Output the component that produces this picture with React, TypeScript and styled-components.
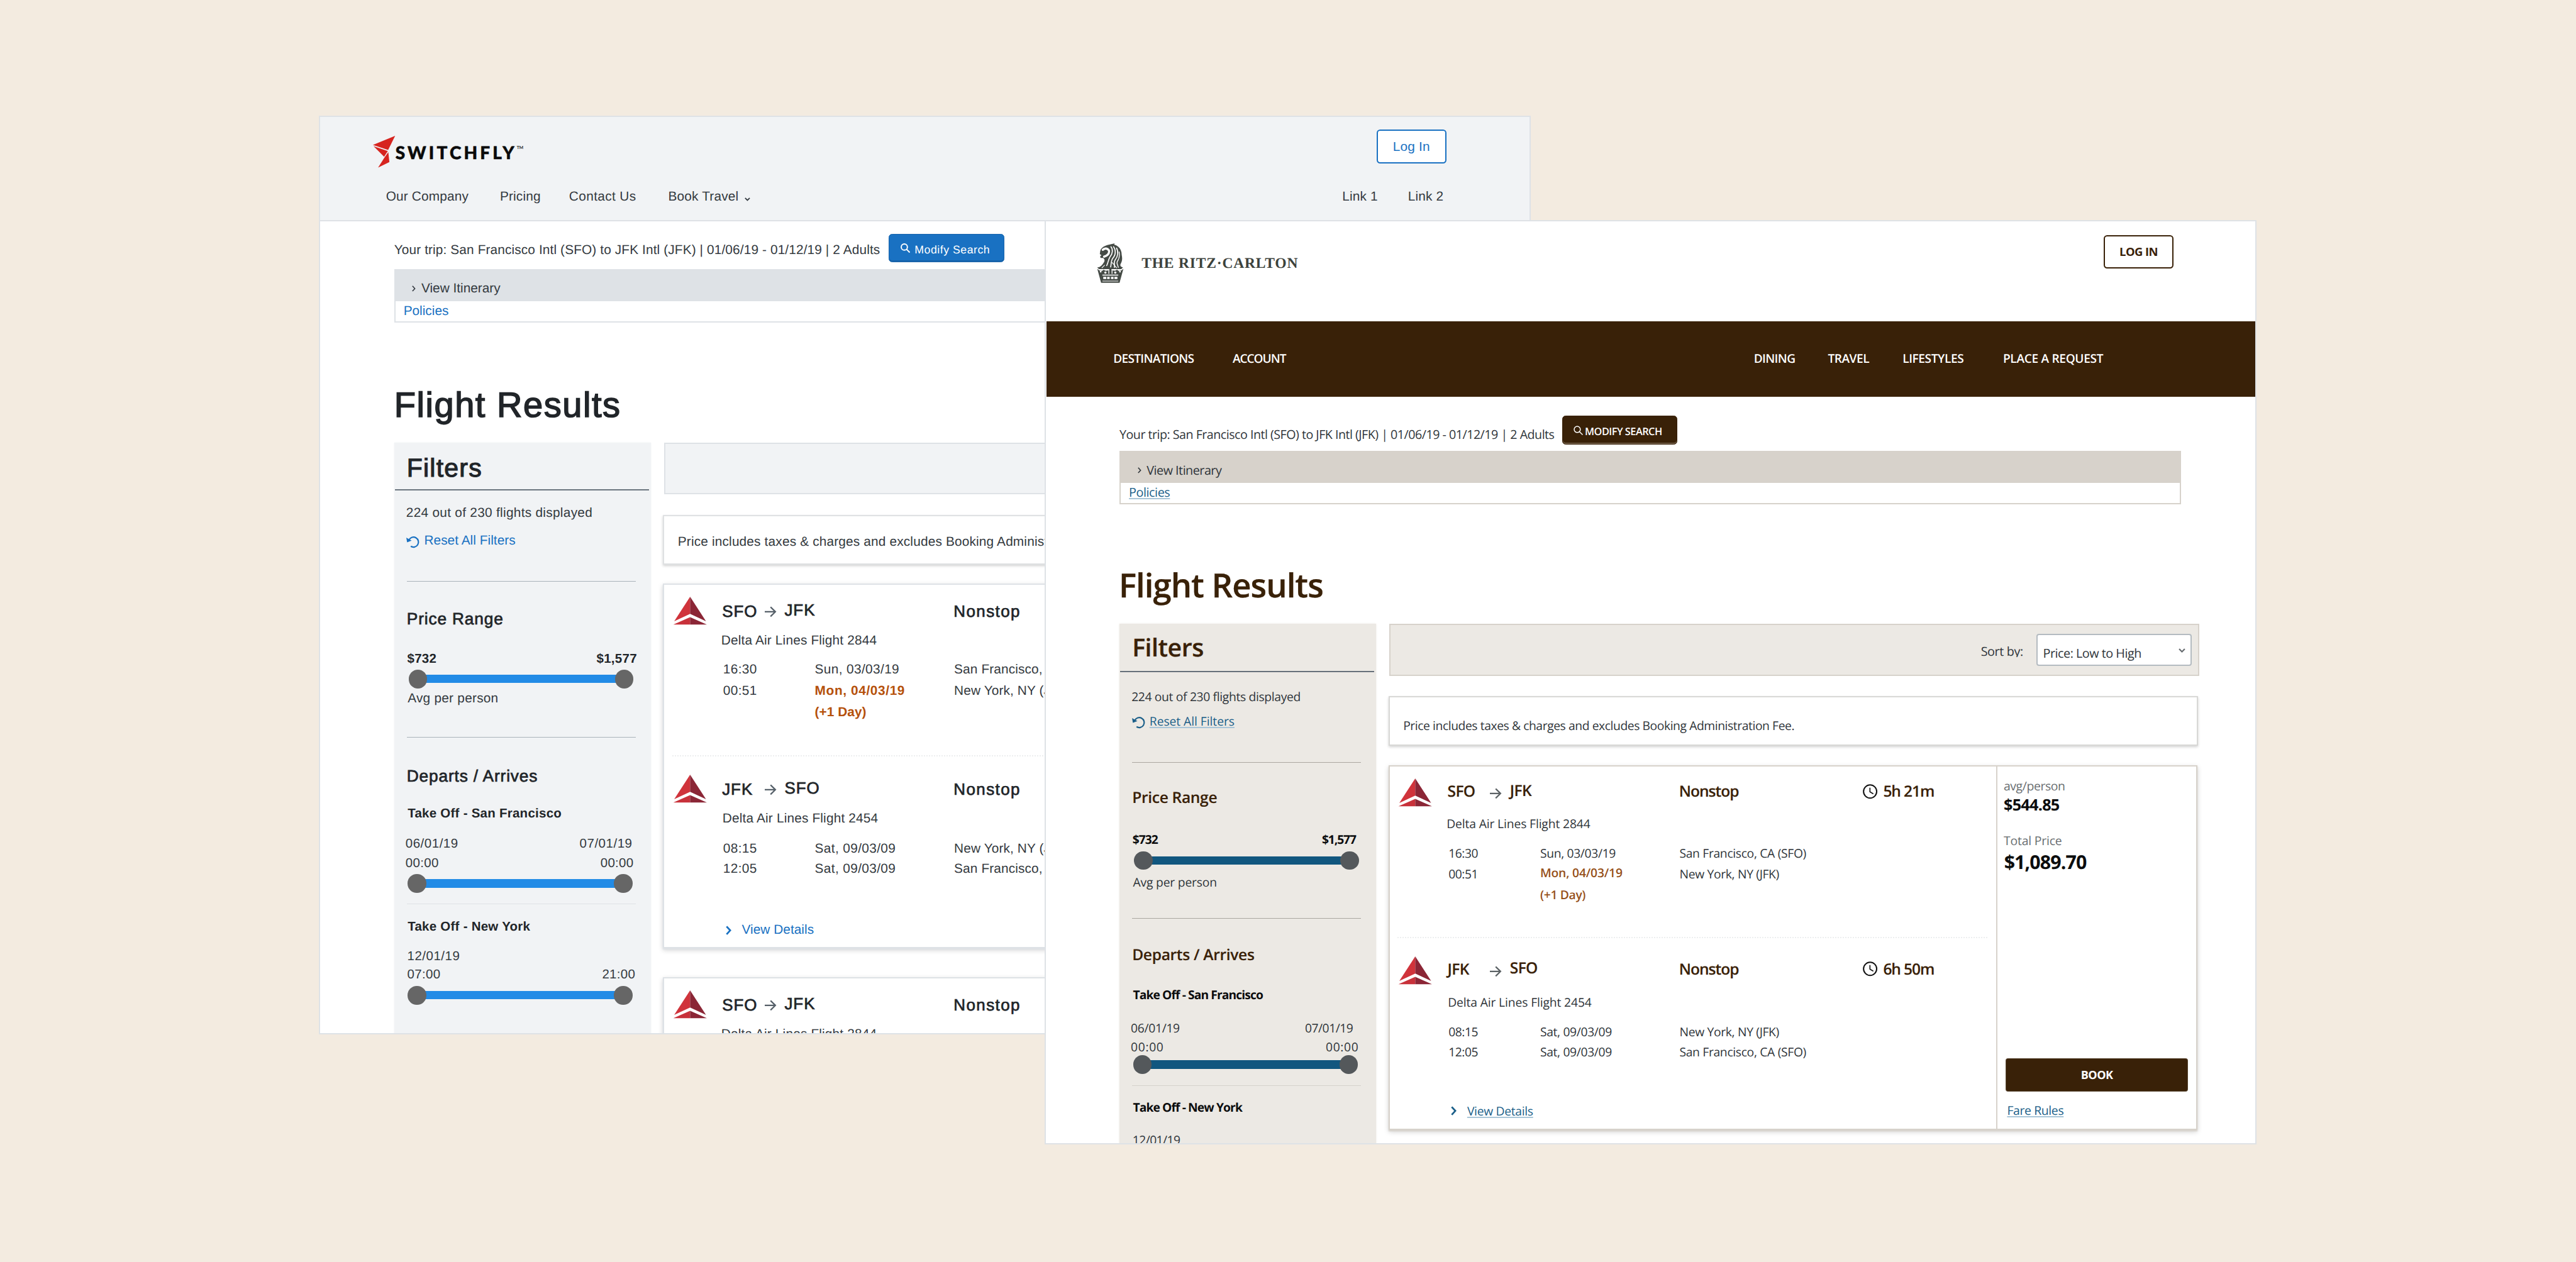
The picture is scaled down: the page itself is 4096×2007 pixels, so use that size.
import React from 'react';
import styled, { createGlobalStyle, ThemeProvider } from 'styled-components';

/* One rem is 100 design units, so u(250) reads "250 design units". */
const u = (n: number) => `${+(n / 100).toFixed(4)}rem`;

const GlobalStyle = createGlobalStyle`
  html { font-size: 68.2667px; text-rendering: geometricPrecision; }
  body { margin: 0; background: #f3ebe0; }
  *, *::before, *::after { box-sizing: border-box; }
`;

/* ---------- brands ---------- */

const switchfly = {
  name: 'switchfly',
  font: '"Liberation Sans", Arial, sans-serif',
  ascent: 0.8465,
  nudge: 1.4,
  heading: '#212529',
  body: '#343a40',
  strong: '#212529',
  link: '#1971c2',
  underline: 'transparent',
  panel: '#f1f3f5',
  band: '#dee2e6',
  border: '#dee2e6',
  rule: '#a9b2ba',
  softRule: '#dee2e6',
  titleRule: '#6a757e',
  track: '#228be6',
  knob: '#666666',
  warn: '#b5500b',
  arrow: '#566069',
  headWeight: 400,
  headStroke: '0.028em',
  warnWeight: 700,
  type: { body: 30.5, dateTrack: 0.018, title: 82, titleTrack: 0.028, filters: 60, filtersTrack: 0.03, h3: 38.5, h3Track: 0.032, city: 38, cityTrack: 0.036, stopTrack: 0.055, bold: 30, boldTrack: 0.013, priceTrack: 0.014, clockTrack: 0.016, detailTrack: 0.008, resetTrack: 0.002, warnTrack: 0.03, tripTrack: 0.006, timeTrack: 0.016, noticeTrack: 0.008 },
  y: { trip: 78, tripRow: 112, modify: 30, view: 51.8, policies: 32.7, title: 219, afterTitle: 59.6, filters: 79, titleRule: 30.8, count: 61.6, reset: 64, rule1: 84, range: 99, price: 91, slider1: 15.6, avg: 33.2, rule2: 79.5, departs: 102.5, takeoff: 85.4, date: 70.1, time: 44.5, slider2: 16, softRule: 25.4, takeoff2: 61.5, date2: 69, notice: 73.8, noticeGap: 47.7, cardGap: 44.2 },
  leg: [ { city: 78.6, to: 76, flight: 64.4, first: 68, second: 48.7 }, { city: 90.5, to: 88, flight: 64.5, first: 70, second: 46.8 } ],
  details: 142.8,
};

const ritz: typeof switchfly = {
  name: 'ritz',
  font: '"Open Sans", "Noto Sans", sans-serif',
  ascent: 0.888,
  nudge: 1.6,
  heading: '#392108',
  body: '#2f353a',
  strong: '#0c0d0e',
  link: '#1b5f89',
  underline: '#a9c6d8',
  panel: '#ece9e4',
  band: '#d7d2cb',
  border: '#d7d2cb',
  rule: '#aaa6a0',
  softRule: '#d5d1cb',
  titleRule: '#66707a',
  track: '#11577f',
  knob: '#54585b',
  warn: '#97511a',
  arrow: '#5c6265',
  headWeight: 600,
  headStroke: '0.006em',
  warnWeight: 600,
  type: { body: 28.3, dateTrack: -0.018, title: 77, titleTrack: -0.018, filters: 57.5, filtersTrack: -0.012, h3: 36, h3Track: -0.013, city: 36, cityTrack: -0.028, stopTrack: -0.04, bold: 28.2, boldTrack: -0.047, priceTrack: -0.056, clockTrack: 0.034, detailTrack: -0.007, resetTrack: -0.003, warnTrack: -0.01, tripTrack: -0.0285, timeTrack: -0.024, noticeTrack: -0.022 },
  y: { trip: 97.3, tripRow: 125.9, modify: 44.2, view: 52, policies: 31, title: 216.6, afterTitle: 62, filters: 75, titleRule: 34.2, count: 65.6, reset: 57.3, rule1: 86.2, range: 95.7, price: 92.6, slider1: 18, avg: 38, rule2: 75, departs: 97, takeoff: 88.7, date: 77, time: 44, slider2: 11, softRule: 25.9, takeoff2: 59.5, date2: 75, notice: 77.5, noticeGap: 46.6, cardGap: 45.8 },
  leg: [ { city: 74.6, to: 72.2, flight: 70.4, first: 68, second: 48.6 }, { city: 85.3, to: 83.3, flight: 73, first: 69, second: 46 } ],
  details: 137.4,
};

/* ---------- type ---------- */

/* Text stacks baseline to baseline: $drop is the distance from the box above to this baseline. */
const Text = styled.span<{ $size: number; $drop: number; $track?: number; $left?: number }>`
  display: block;
  white-space: nowrap;
  font-size: ${p => u(p.$size)};
  line-height: 1;
  letter-spacing: ${p => p.$track ?? 0}em;
  color: ${p => p.theme.body};
  margin: ${p => u(p.$drop - p.theme.ascent * p.$size + p.theme.nudge)} 0 ${p => u(-(1 - p.theme.ascent) * p.$size - p.theme.nudge)} ${p => u(p.$left ?? 0)};
`;
const Heading = styled(Text)`
  color: ${p => p.theme.heading};
  font-weight: ${p => p.theme.headWeight};
  -webkit-text-stroke: ${p => p.theme.headStroke} currentColor;
`;
const Strong = styled(Text)`
  color: ${p => p.theme.strong};
  font-weight: 700;
`;
const Muted = styled(Text)`
  color: #696e71;
`;
const Warn = styled(Text)`
  color: ${p => p.theme.warn};
  font-weight: ${p => p.theme.warnWeight};
`;
const Link = styled(Text)`
  color: ${p => p.theme.link};
  text-decoration: underline 2px ${p => p.theme.underline};
  text-underline-offset: ${u(3)};
  text-decoration-skip-ink: none;
`;
const White = styled(Text)`
  color: #fff;
  font-weight: 600;
`;
const ModifyLabel = styled(Text)`
  color: #fff;
`;

/* ---------- frame ---------- */

const Desktop = styled.main`
  position: relative;
  width: 100vw;
  height: 100vh;
  overflow: hidden;
  background: #f3ebe0;
`;
const Window = styled.section<{ $x: number; $y: number; $w: number; $h: number }>`
  position: absolute;
  left: ${p => u(p.$x)};
  top: ${p => u(p.$y)};
  width: ${p => u(p.$w)};
  height: ${p => u(p.$h)};
  overflow: hidden;
  background: #fff;
  font-family: ${p => p.theme.font};
  &::after {
    content: '';
    position: absolute;
    inset: 0;
    border: 2px solid #dee2e6;
  }
`;
const Svg = styled.svg<{ $w: number; $h: number; $top?: number; $left?: number }>`
  display: block;
  flex: none;
  width: ${p => u(p.$w)};
  height: ${p => u(p.$h)};
  margin: ${p => u(p.$top ?? 0)} 0 0 ${p => u(p.$left ?? 0)};
  overflow: visible;
`;
const Row = styled.div`
  display: flex;
  align-items: flex-start;
`;

/* ---------- headers ---------- */

const SwitchHeader = styled.header`
  height: ${u(246)};
  background: #f1f3f5;
  border-bottom: 2px solid #dee2e6;
`;
const LogoRow = styled(Row)<{ $h: number; $left: number; $right: number }>`
  height: ${p => u(p.$h)};
  padding: 0 ${p => u(p.$right)} 0 ${p => u(p.$left)};
`;
const Wordmark = styled(Text)`
  font-family: Lato, sans-serif;
  font-weight: 900;
  color: #0a0a0a;
  -webkit-text-stroke: 0.02em currentColor;
`;
const Trademark = styled(Wordmark)`
  font-weight: 400;
`;
const RitzName = styled(Text)`
  font-family: "Liberation Serif", serif;
  font-weight: 700;
  color: #3c423c;
`;
const OutlineButton = styled.button<{ $w: number; $h: number; $top: number; $fs: number; $track: number }>`
  margin: ${p => u(p.$top)} 0 0 auto;
  width: ${p => u(p.$w)};
  height: ${p => u(p.$h)};
  padding: 0;
  flex: none;
  background: #fff;
  border: 2px solid ${p => (p.theme.name === 'ritz' ? p.theme.heading : p.theme.link)};
  border-radius: ${u(8)};
  color: ${p => (p.theme.name === 'ritz' ? p.theme.heading : p.theme.link)};
  font: ${p => (p.theme.name === 'ritz' ? 700 : 400)} ${p => u(p.$fs)} / 1 ${p => p.theme.font};
  letter-spacing: ${p => p.$track}em;
`;
const SwitchNav = styled.nav`
  display: grid;
  padding-left: ${u(156)};
  grid-template-columns: ${u(265.5)} ${u(161)} ${u(231)} ${u(178)} ${u(1392)} ${u(153)} auto;
`;
const RitzHeader = styled.header`
  height: ${u(236)};
`;
const RitzNav = styled.nav`
  display: grid;
  height: ${u(175.9)};
  margin: 0 ${u(3)} 0 ${u(5)};
  padding-left: ${u(155.5)};
  background: #392108;
  grid-template-columns: ${u(278)} ${u(1214)} ${u(172.5)} ${u(174)} ${u(234)} auto;
`;

/* ---------- trip summary ---------- */

const Content = styled.div`
  padding-left: ${u(175)};
`;
const TripRow = styled.div`
  display: grid;
  align-items: start;
  grid-template-columns: ${p => u(p.theme.name === 'ritz' ? 1031 : 1152)} ${u(270)};
  height: ${p => u(p.theme.y.tripRow)};
`;
const ModifyButton = styled.div`
  display: flex;
  align-items: flex-start;
  width: ${u(269)};
  height: ${u(66.5)};
  margin-top: ${p => u(p.theme.y.modify)};
  background: ${p => (p.theme.name === 'ritz' ? '#392108' : '#1971c2')};
  border: 1px solid ${p => (p.theme.name === 'ritz' ? '#392108' : '#1864ab')};
  border-radius: ${u(8)};
  box-shadow: inset 0 -2px 0 ${p => (p.theme.name === 'ritz' ? '#6d5a45' : '#1864ab')};
`;
const Itinerary = styled.div`
  width: ${u(2473)};
  height: ${u(125)};
  border: 2px solid ${p => p.theme.border};
`;
const ItineraryHead = styled(Row)`
  height: ${u(71.9)};
  background: ${p => p.theme.band};
`;

/* ---------- filters ---------- */

const Body = styled.div`
  display: flex;
  align-items: flex-start;
  gap: ${u(28.6)};
  margin-top: ${p => u(p.theme.y.afterTitle)};
`;
const Sidebar = styled.aside`
  flex: none;
  width: ${u(597.8)};
  height: ${u(1600)};
  background: ${p => p.theme.panel};
  box-shadow: 0 0 3px ${p => p.theme.panel};
`;
const Rule = styled.hr<{ $drop: number; $kind?: 'title' | 'soft' }>`
  height: ${p => (p.$kind === 'title' ? '2px' : '1px')};
  border: 0;
  margin: ${p => u(p.$drop)} ${p => u(p.$kind === 'title' ? 4 : 35)} 0 ${p => u(p.$kind === 'title' ? 2 : 29.5)};
  background: ${p => (p.$kind === 'title' ? p.theme.titleRule : p.$kind === 'soft' ? p.theme.softRule : p.theme.rule)};
`;
const Pair = styled.div<{ $second: number }>`
  display: grid;
  grid-template-columns: ${p => u(p.$second)} auto;
`;
const SliderBox = styled.div<{ $drop: number; $left: number }>`
  display: flex;
  align-items: center;
  width: ${u(524)};
  height: ${u(43.6)};
  margin: ${p => u(p.$drop)} 0 0 ${p => u(p.$left)};
`;
const Knob = styled.i`
  flex: none;
  width: ${u(43.4)};
  height: ${u(43.6)};
  border-radius: 50%;
  background: ${p => p.theme.knob};
  z-index: 1;
`;
const Track = styled.i`
  flex: 1;
  height: ${u(19.8)};
  margin: 0 ${u(-8)};
  background: ${p => p.theme.track};
`;
const Slider = ({ drop, left }: { drop: number; left: number }) => (
  <SliderBox $drop={drop} $left={left}><Knob /><Track /><Knob /></SliderBox>
);

/* ---------- results ---------- */

const Results = styled.div`
  flex: none;
  width: ${u(1888)};
`;
const SortBar = styled(Row)`
  width: ${u(1886)};
  height: ${u(120.8)};
  margin-left: ${u(2)};
  background: ${p => p.theme.panel};
  border: 2px solid ${p => p.theme.border};
`;
const SortLabel = styled.label`
  margin-left: ${u(1375)};
  height: ${u(73.3)};
  width: ${u(130)};
  overflow: hidden;
`;
const Select = styled(Row)`
  width: ${u(361)};
  height: ${u(74)};
  margin-top: ${u(20)};
  background: #fff;
  border: 2px solid #b4bbc1;
  border-radius: ${u(6)};
`;
const Notice = styled.div`
  width: ${u(1886)};
  height: ${u(116)};
  margin-top: ${p => u(p.theme.y.noticeGap)};
  background: #fff;
  border: 2px solid ${p => (p.theme.name === 'ritz' ? '#d8d8d6' : '#dfe1e3')};
  box-shadow: 0 2px 4px rgba(0, 0, 0, 0.18);
`;
const Card = styled.article<{ $gap: number }>`
  display: grid;
  grid-template-columns: ${u(1415.7)} 1fr;
  width: ${u(1884)};
  height: ${u(849.5)};
  margin-top: ${p => u(p.$gap)};
  background: #fff;
  box-shadow: inset 0 0 0 2px ${p => p.theme.border}, 0 2px 2px ${p => p.theme.border}, 0 3px 8px rgba(0, 0, 0, 0.18);
`;
const Leg = styled.div<{ $last?: boolean }>`
  height: ${p => (p.$last ? 'auto' : u(403))};
  margin: 0 ${u(20.4)} 0 ${u(21)};
  border-bottom: ${p => (p.$last ? '0' : '2px dotted #eceeef')};
`;
/* Ends on the city baseline; the airline mark hangs a little below it. */
const LegHead = styled.div<{ $h: number }>`
  display: grid;
  align-items: start;
  height: ${p => u(p.$h)};
  grid-template-columns: ${u(116.6)} ${u(98.7)} ${u(46.7)} ${u(393.8)} ${u(427.7)} ${u(48)} auto;
`;
const LegTimes = styled.div`
  display: grid;
  align-items: start;
  padding-left: ${u(119)};
  grid-template-columns: ${u(213.5)} ${u(324.5)} auto;
`;
const PriceColumn = styled.div`
  padding-left: ${u(14.5)};
  border-left: 2px solid ${p => p.theme.border};
`;
const BookButton = styled.div`
  width: ${u(425)};
  height: ${u(76.6)};
  margin: ${u(441)} 0 0 ${u(4.5)};
  display: flex;
  justify-content: center;
  align-items: flex-start;
  background: #392108;
  border: 1px solid #5b4833;
  border-radius: ${u(5)};
`;
const BookLabel = styled(White)`
  font-weight: 700;
`;

/* ---------- drawings ---------- */

const DeltaLogo = ({ top }: { top: number }) => (
  <Svg $w={80} $h={65} $top={top} $left={1.6} viewBox="0 0 80 65">
    <path d="M40 0 L3 57 L40 40Z" fill="#d0333b" />
    <path d="M40 0 L77 57 L40 40Z" fill="#8b2636" />
    <path d="M40 47.5 L1 64.8 H40Z" fill="#c8313a" />
    <path d="M40 47.5 L79 64.8 H40Z" fill="#8b2636" />
  </Svg>
);
const SwitchMark = () => (
  <Svg $w={52} $h={74} $top={47.7} viewBox="0 0 52 74" fill="#d6241f">
    <path d="M51.7 0 L35.4 33 L0 21.4Z" />
    <path d="M1.5 24 L34.6 35.4 L26 48.6Z" />
    <path d="M35.8 38 L38.3 61 L12 74 L27.6 49.5Z" />
  </Svg>
);
const LionCrown = () => (
  <Svg $w={63} $h={92} $top={55} viewBox="0 0 63 92" fill="#454b46">
    <path d="M8 18 C10 9 20 5 29 3 L42 0 C39 3 41 3 46 5 C54 10 58 17 58 27 C60 36 59 42 55 49 C54 53 57 55 61 56 L57 60 H5 L1 56 C8 56 12 51 16 45 C20 39 17 36 15 34 L9 34 C7 31 8 29 11 28 L7 25Z" />
    <g fill="none" stroke="#fff" strokeLinecap="round">
      <path d="M14 15 C19 10 25 12 28 16 C30 21 27 26 22 29 L17 31" strokeWidth="5" />
      <path d="M33 8 C38 14 37 24 31 31 C27 37 27 44 23 52" strokeWidth="2.4" />
      <path d="M39 8 C45 16 44 28 37 35 C33 40 34 48 32 57" strokeWidth="2.4" />
      <path d="M46 11 C51 20 49 31 43 38 C39 43 42 49 41 56" strokeWidth="2.4" />
      <path d="M52 20 C54 30 52 36 48 42 C45 47 49 50 50 56" strokeWidth="2" />
      <path d="M18 51 L12 57 M36 45 L46 57" strokeWidth="1.8" />
    </g>
    <circle cx="17" cy="19" r="1.8" />
    <path d="M1 59 C7 66 13 65 16 61 C20 65 26 65 31.5 59 C37 65 43 65 47 61 C50 65 56 66 62 59 L53 92 H10Z" />
    <path d="M31.5 56 V80" stroke="#454b46" strokeWidth="5" />
    <g fill="#fff">
      <circle cx="9" cy="66" r="2" /><circle cx="20" cy="68" r="2.6" /><circle cx="43" cy="68" r="2.6" /><circle cx="54" cy="66" r="2" />
      <path d="M13 73 H50 V75 H13Z M13 87 H50 V88.6 H13Z" />
      <path d="M15 78 h7 v5 h-7z M24 78 h6 v5 h-6z M33 78 h6 v5 h-6z M41 78 h7 v5 h-7z" />
      <path d="M27 60 h2 v11 h-2z M34.5 60 h2 v11 h-2z" />
    </g>
  </Svg>
);
const ChevronRight = ({ w, h, top, left, color, width }: { w: number; h: number; top: number; left: number; color: string; width: number }) => (
  <Svg $w={w} $h={h} $top={top} $left={left} viewBox="0 0 10 18" preserveAspectRatio="none" fill="none">
    <path d="M1.5 1.5 L8 9 L1.5 16.5" stroke={color} strokeWidth={width} />
  </Svg>
);
const ChevronDown = ({ size, top, left, color }: { size: number; top: number; left: number; color: string }) => (
  <Svg $w={size} $h={size * 0.625} $top={top} $left={left} viewBox="0 0 16 10" fill="none">
    <path d="M1.5 1.5 L8 8 L14.5 1.5" stroke={color} strokeWidth="3.2" />
  </Svg>
);
const ArrowRight = ({ top, color }: { top: number; color: string }) => (
  <Svg $w={27} $h={26} $top={top} viewBox="0 0 27 26" fill="none">
    <path d="M0 13 H24 M13.5 2 L24.8 13 L13.5 24" stroke={color} strokeWidth="3.2" />
  </Svg>
);
const Clock = ({ top }: { top: number }) => (
  <Svg $w={34} $h={34.5} $top={top} viewBox="0 0 34 34.5" fill="none" stroke="#111">
    <circle cx="17" cy="17.2" r="15.3" strokeWidth="3" />
    <path d="M16.6 8.5 V18 L24.5 22.6" strokeWidth="2.4" />
  </Svg>
);
const ResetIcon = ({ top, color }: { top: number; color: string }) => (
  <Svg $w={30} $h={28} $top={top} $left={29} viewBox="0 0 30 28">
    <path d="M6.5 9.5 A11.6 11.6 0 1 1 10.5 24.6" fill="none" stroke={color} strokeWidth="3.2" />
    <path d="M0 4.5 L2 15.5 L12.5 11.2Z" fill={color} />
  </Svg>
);
const SearchIcon = ({ size, top, left, width }: { size: number; top: number; left: number; width: number }) => (
  <Svg $w={size} $h={size} $top={top} $left={left} viewBox="0 0 22 22" fill="none" stroke="#fff" strokeWidth={width}>
    <circle cx="8.5" cy="8.5" r="7" />
    <path d="M13.5 13.5 L20.8 20.8" />
  </Svg>
);

/* ---------- sections ---------- */

type Brand = typeof switchfly;

const Trip = ({ b }: { b: Brand }) => {
  const isRitz = b.name === 'ritz';
  return (
    <>
      <TripRow>
        <Text $size={isRitz ? 28.8 : b.type.body} $drop={b.y.trip} $track={b.type.tripTrack + (isRitz ? 0.003 : 0)}>
          Your trip: San Francisco Intl (SFO) to JFK Intl (JFK) | 01/06/19 - 01/12/19 | 2 Adults
        </Text>
        <ModifyButton>
          {isRitz ? (
            <>
              <SearchIcon size={22.5} top={21} left={24.5} width={2.1} />
              <White $size={24} $drop={42.5} $track={-0.033} $left={4.5}>MODIFY SEARCH</White>
            </>
          ) : (
            <>
              <SearchIcon size={22.5} top={21} left={26} width={2.8} />
              <ModifyLabel $size={26} $drop={43.5} $track={0.028} $left={10.5}>Modify Search</ModifyLabel>
            </>
          )}
        </ModifyButton>
      </TripRow>
      <Itinerary>
        <ItineraryHead>
          <ChevronRight w={8.5} h={14.5} top={34.5} left={39} color={b.body} width={2.8} />
          <Text $size={isRitz ? 29 : 30.5} $drop={b.y.view} $track={isRitz ? -0.026 : 0} $left={13}>View Itinerary</Text>
        </ItineraryHead>
        <Link $size={isRitz ? 29 : 30.5} $drop={b.y.policies} $track={isRitz ? -0.022 : 0} $left={19}>Policies</Link>
      </Itinerary>
    </>
  );
};

const Filters = ({ b }: { b: Brand }) => {
  const { y, type: t } = b;
  const isRitz = b.name === 'ritz';
  return (
    <Sidebar>
      <Heading $size={t.filters} $drop={y.filters} $track={t.filtersTrack} $left={29.5}>Filters</Heading>
      <Rule $kind="title" $drop={y.titleRule} />
      <Text $size={t.body} $drop={y.count} $track={isRitz ? -0.018 : 0.014} $left={28}>224 out of 230 flights displayed</Text>
      <Row>
        <ResetIcon top={y.reset - 21} color={b.link} />
        <Link $size={t.body} $drop={y.reset} $track={t.resetTrack} $left={11}>Reset All Filters</Link>
      </Row>
      <Rule $drop={y.rule1 - 7} />
      <Heading $size={t.h3} $drop={y.range} $track={t.h3Track} $left={29.5}>Price Range</Heading>
      <Pair $second={440.5}>
        <Strong $size={t.bold} $drop={y.price} $track={t.priceTrack} $left={30.5}>$732</Strong>
        <Strong $size={t.bold} $drop={y.price} $track={t.priceTrack} $left={31}>$1,577</Strong>
      </Pair>
      <Slider drop={y.slider1} left={33.8} />
      <Text $size={t.body} $drop={y.avg} $track={isRitz ? -0.01 : 0.012} $left={31.5}>Avg per person</Text>
      <Rule $drop={y.rule2} />
      <Heading $size={t.h3} $drop={y.departs} $track={t.h3Track} $left={29.5}>Departs / Arrives</Heading>
      <Strong $size={t.bold} $drop={y.takeoff} $track={t.boldTrack} $left={31.5}>Take Off - San Francisco</Strong>
      <Pair $second={405.5}>
        <Text $size={t.bold} $drop={y.date} $track={isRitz ? -0.016 : 0.026} $left={26.5}>06/01/19</Text>
        <Text $size={t.bold} $drop={y.date} $track={isRitz ? -0.024 : 0.026} $left={26.5}>07/01/19</Text>
      </Pair>
      <Pair $second={454}>
        <Text $size={t.bold} $drop={y.time} $track={t.clockTrack} $left={26.5}>00:00</Text>
        <Text $size={t.bold} $drop={y.time} $track={t.clockTrack} $left={26.5}>00:00</Text>
      </Pair>
      <Slider drop={y.slider2} left={31.5} />
      <Rule $kind="soft" $drop={y.softRule} />
      <Strong $size={t.bold} $drop={y.takeoff2} $track={t.boldTrack} $left={31.5}>Take Off - New York</Strong>
      <Text $size={t.bold} $drop={y.date2} $track={isRitz ? -0.03 : 0.026} $left={30.5}>12/01/19</Text>
      {!isRitz && (
        <>
          <Pair $second={454}>
            <Text $size={t.bold} $drop={43.5} $track={t.clockTrack} $left={30.5}>07:00</Text>
            <Text $size={t.bold} $drop={43.5} $track={t.clockTrack} $left={30.5}>21:00</Text>
          </Pair>
          <Slider drop={16} left={31.5} />
        </>
      )}
    </Sidebar>
  );
};

interface Stop { time: string; date: string; place: string; late?: boolean }
interface Flight { from: string; to: string; number: string; length: string; stops: Stop[] }

const flights: Flight[] = [
  { from: 'SFO', to: 'JFK', number: '2844', length: '5h 21m', stops: [
    { time: '16:30', date: 'Sun, 03/03/19', place: 'San Francisco, CA (SFO)' },
    { time: '00:51', date: 'Mon, 04/03/19', place: 'New York, NY (JFK)', late: true } ] },
  { from: 'JFK', to: 'SFO', number: '2454', length: '6h 50m', stops: [
    { time: '08:15', date: 'Sat, 09/03/09', place: 'New York, NY (JFK)' },
    { time: '12:05', date: 'Sat, 09/03/09', place: 'San Francisco, CA (SFO)' } ] },
];

const FlightLeg = ({ b, f, i, brief }: { b: Brand; f: Flight; i: number; brief?: boolean }) => {
  const m = b.leg[i];
  const t = b.type;
  const isRitz = b.name === 'ritz';
  return (
    <Leg $last={i === 1}>
      <LegHead $h={m.city}>
        <DeltaLogo top={i ? 42 : 30.8} />
        <Heading $size={t.city} $drop={m.city} $track={t.cityTrack}>{f.from}</Heading>
        <ArrowRight top={m.city - (isRitz ? 21.5 : 26)} color={b.arrow} />
        <Heading $size={t.city} $drop={m.to} $track={t.cityTrack}>{f.to}</Heading>
        <Heading $size={t.city} $drop={m.city} $track={t.stopTrack}>Nonstop</Heading>
        {isRitz && <Clock top={m.city - 31.5} />}
        {isRitz && <Heading $size={t.city} $drop={m.city} $track={-0.045}>{f.length}</Heading>}
      </LegHead>
      <Text $size={t.body} $drop={m.flight} $track={t.detailTrack} $left={i ? 117.5 : 114.5}>Delta Air Lines Flight {f.number}</Text>
      {!brief && f.stops.map((s, n) => (
        <LegTimes key={n}>
          <Text $size={t.body} $drop={n ? m.second : m.first} $track={t.timeTrack}>{s.time}</Text>
          {s.late ? (
            <div>
              <Warn $size={t.body} $drop={m.second - (isRitz ? 1.8 : 0)} $track={t.warnTrack}>{s.date}</Warn>
              <Warn $size={t.body} $drop={50.9} $track={isRitz ? -0.018 : 0.002}>(+1 Day)</Warn>
            </div>
          ) : (
            <Text $size={t.body} $drop={n ? m.second : m.first} $track={t.dateTrack}>{s.date}</Text>
          )}
          <Text $size={t.body} $drop={n ? m.second : m.first} $track={isRitz ? -0.017 : 0.006}>{s.place}</Text>
        </LegTimes>
      ))}
    </Leg>
  );
};

const FlightCard = ({ b, gap, brief }: { b: Brand; gap: number; brief?: boolean }) => (
  <Card $gap={gap}>
    <div>
      {(brief ? flights.slice(0, 1) : flights).map((f, i) => <FlightLeg key={i} b={b} f={f} i={i} brief={brief} />)}
      {!brief && (
        <Row>
          <ChevronRight w={13} h={22} top={b.details - 20} left={146} color={b.link} width={3.2} />
          <Link $size={b.type.body} $drop={b.details} $track={b.name === 'ritz' ? -0.016 : 0.002} $left={24.5}>View Details</Link>
        </Row>
      )}
    </div>
    {b.name === 'ritz' && (
      <PriceColumn>
        <Muted $size={28.5} $drop={56.5} $track={-0.022}>avg/person</Muted>
        <Strong $size={37} $drop={49} $track={-0.03}>$544.85</Strong>
        <Muted $size={28.5} $drop={78.5} $track={-0.011}>Total Price</Muted>
        <Strong $size={44.5} $drop={57.7} $track={-0.029} $left={1}>$1,089.70</Strong>
        <BookButton><BookLabel $size={26.5} $drop={47} $track={-0.03}>BOOK</BookLabel></BookButton>
        <Link $size={28.5} $drop={53.7} $track={-0.02} $left={8}>Fare Rules</Link>
      </PriceColumn>
    )}
  </Card>
);

const Page = ({ b }: { b: Brand }) => {
  const isRitz = b.name === 'ritz';
  return (
    <Content>
      <Trip b={b} />
      <Heading as="h1" $size={b.type.title} $drop={b.y.title} $track={b.type.titleTrack} $left={isRitz ? -1.5 : 0}>Flight Results</Heading>
      <Body>
        <Filters b={b} />
        <Results>
          <SortBar>
            {isRitz && (
              <>
                <SortLabel><Text $size={29} $drop={71} $track={-0.02}>Sort by:</Text></SortLabel>
                <Select>
                  <Text $size={29} $drop={51.5} $track={-0.025} $left={12}>Price: Low to High</Text>
                  <ChevronDown size={16} top={30} left={87} color="#666b6f" />
                </Select>
              </>
            )}
          </SortBar>
          <Notice>
            <Text $size={b.type.body} $drop={b.y.notice - 3} $track={b.type.noticeTrack} $left={31.5}>
              Price includes taxes &amp; charges and excludes Booking Administration Fee.
            </Text>
          </Notice>
          <FlightCard b={b} gap={b.y.cardGap} />
          {!isRitz && <FlightCard b={b} gap={67.5} brief />}
        </Results>
      </Body>
    </Content>
  );
};

export default function App() {
  return (
    <Desktop>
      <GlobalStyle />
      <ThemeProvider theme={switchfly}>
        <Window $x={743} $y={269} $w={2823} $h={2141}>
          <SwitchHeader>
            <LogoRow $h={122} $left={126} $right={197}>
              <SwitchMark />
              <Wordmark $size={41} $drop={98} $track={0.148}>SWITCHFLY</Wordmark>
              <Trademark $size={10} $drop={77.5} $track={0}>TM</Trademark>
              <OutlineButton $w={163} $h={79} $top={33} $fs={30.5} $track={0.01}>Log In</OutlineButton>
            </LogoRow>
            <SwitchNav>
              <Text $size={30.5} $drop={77.5} $track={0.008}>Our Company</Text>
              <Text $size={30.5} $drop={77.5} $track={0.008}>Pricing</Text>
              <Text $size={30.5} $drop={77.5} $track={0.018}>Contact Us</Text>
              <Text $size={30.5} $drop={77.5} $track={0.008}>Book Travel</Text>
              <ChevronDown size={13} top={69} left={0} color="#343a40" />
              <Text $size={30.5} $drop={77.5} $track={0.008}>Link 1</Text>
              <Text $size={30.5} $drop={77.5} $track={0.008}>Link 2</Text>
            </SwitchNav>
          </SwitchHeader>
          <Page b={switchfly} />
        </Window>
      </ThemeProvider>
      <ThemeProvider theme={ritz}>
        <Window $x={2432.5} $y={512.5} $w={2823.5} $h={2153}>
          <RitzHeader>
            <LogoRow $h={236} $left={121.5} $right={193.5}>
              <LionCrown />
              <RitzName $size={34.5} $drop={114.5} $track={0.034} $left={42}>THE RITZ·CARLTON</RitzName>
              <OutlineButton $w={162.5} $h={78} $top={34.8} $fs={27} $track={-0.03}>LOG IN</OutlineButton>
            </LogoRow>
          </RitzHeader>
          <RitzNav>
            <White $size={28} $drop={97} $track={-0.036}>DESTINATIONS</White>
            <White $size={28} $drop={97} $track={-0.055}>ACCOUNT</White>
            <White $size={28} $drop={97} $track={-0.032}>DINING</White>
            <White $size={28} $drop={97} $track={-0.025}>TRAVEL</White>
            <White $size={28} $drop={97} $track={-0.022}>LIFESTYLES</White>
            <White $size={28} $drop={97} $track={-0.017}>PLACE A REQUEST</White>
          </RitzNav>
          <Page b={ritz} />
        </Window>
      </ThemeProvider>
    </Desktop>
  );
}
